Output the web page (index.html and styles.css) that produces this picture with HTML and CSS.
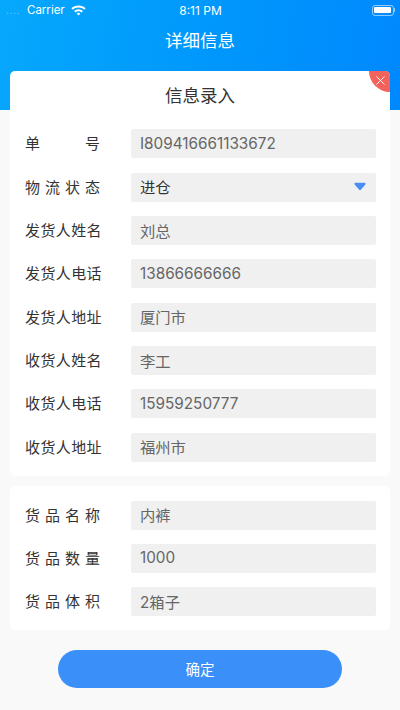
FILE: index.html
```html
<!DOCTYPE html>
<html lang="zh-CN">

<head>
  <meta charset="UTF-8">
  <meta name="viewport" content="width=device-width, initial-scale=1.0">
  <title>详细信息</title>
  <link rel="stylesheet" href="styles.css">
</head>

<body>
  <header class="header">
    <div class="status-bar">
      <div class="status-left">
        <span class="signal">....</span>
        <span>Carrier</span>
        <svg class="wifi" width="15" height="11" viewBox="0 0 15 11">
          <path d="M7.5 0.5C4.7 0.5 2.3 1.5 0.4 3.3L1.8 4.8C3.3 3.4 5.3 2.5 7.5 2.5S11.700 3.4 13.200 4.800L14.600 3.300C12.700 1.500 10.300 0.500 7.500 0.500Z" fill="#fff" />
          <path d="M7.500 4.200C5.800 4.200 4.300 4.900 3.100 6L4.500 7.400C5.300 6.700 6.300 6.200 7.500 6.200S9.700 6.700 10.500 7.400L11.900 6C10.700 4.900 9.200 4.200 7.500 4.200Z" fill="#fff" />
          <path d="M7.500 7.700C6.800 7.700 6.200 8 5.700 8.400L7.500 10.500L9.300 8.400C8.800 8 8.200 7.700 7.500 7.700Z" fill="#fff" />
        </svg>
      </div>
      <div class="status-time">8:11 PM</div>
      <div class="battery">
        <div class="battery-body">
          <div class="battery-fill"></div>
        </div>
        <div class="battery-cap"></div>
      </div>
    </div>
    <h1 class="page-title">详细信息</h1>
  </header>

  <main class="content">
    <section class="card card-main">
      <div class="close">
        <svg width="9" height="9" viewBox="0 0 9 9">
          <path d="M0.500 0.500L8.500 8.500M8.500 0.500L0.500 8.500" stroke="#fff" stroke-width="1" fill="none" />
        </svg>
      </div>
      <h2 class="card-title">信息录入</h2>
      <div class="rows">
        <div class="row">
          <div class="label">单号</div>
          <div class="field">I809416661133672</div>
        </div>
        <div class="row">
          <div class="label">物流状态</div>
          <div class="field field-select">
            <span>进仓</span>
            <svg class="arrow" width="12" height="9" viewBox="0 0 13 9">
              <path d="M1.500 0.500H11.500C12.500 0.500 12.900 1.500 12.300 2.200L7.400 8C6.900 8.500 6.100 8.500 5.600 8L0.700 2.200C0.100 1.500 0.500 0.500 1.500 0.500Z" fill="#4a8cf7" />
            </svg>
          </div>
        </div>
        <div class="row">
          <div class="label">发货人姓名</div>
          <div class="field">刘总</div>
        </div>
        <div class="row">
          <div class="label">发货人电话</div>
          <div class="field">13866666666</div>
        </div>
        <div class="row">
          <div class="label">发货人地址</div>
          <div class="field">厦门市</div>
        </div>
        <div class="row">
          <div class="label">收货人姓名</div>
          <div class="field">李工</div>
        </div>
        <div class="row">
          <div class="label">收货人电话</div>
          <div class="field">15959250777</div>
        </div>
        <div class="row">
          <div class="label">收货人地址</div>
          <div class="field">福州市</div>
        </div>
      </div>
    </section>

    <section class="card card-goods">
      <div class="rows">
        <div class="row">
          <div class="label">货品名称</div>
          <div class="field">内裤</div>
        </div>
        <div class="row">
          <div class="label">货品数量</div>
          <div class="field">1000</div>
        </div>
        <div class="row">
          <div class="label">货品体积</div>
          <div class="field">2箱子</div>
        </div>
      </div>
    </section>

    <button class="submit" type="button">确定</button>
  </main>
</body>

</html>
```

FILE: styles.css
```css
* {
  box-sizing: border-box;
}

html,
body {
  height: 100%;
}

body {
  margin: 0;
  background-color: #f9f9f9;
  font-family: Inter, "Noto Sans CJK SC", sans-serif;
  color: #333;
  overflow: hidden;
}

.header {
  height: 110px;
  background: linear-gradient(100deg, #06a8fc 0%, #0098fc 50%, #0088fe 100%);
  color: white;
}

.status-bar {
  display: flex;
  align-items: center;
  justify-content: space-between;
  height: 20px;
  padding: 0 5px 0 6px;
  font-size: 11.5px;
}

.status-left {
  display: flex;
  flex: 1;
  align-items: center;
  gap: 5px;
}

.signal {
  width: 16px;
  color: rgba(255, 255, 255, 0.45);
  letter-spacing: 0.6px;
  font-size: 10px;
}

.wifi {
  margin-left: 1px;
}

.status-time {
  font-size: 12px;
  text-align: center;
}

.battery {
  display: flex;
  flex: 1;
  align-items: center;
  justify-content: flex-end;
}

.battery-body {
  width: 22px;
  height: 11px;
  padding: 1.5px;
  border: 1px solid rgba(255, 255, 255, 0.55);
  border-radius: 3px;
}

.battery-fill {
  height: 100%;
  background-color: white;
  border-radius: 1px;
}

.battery-cap {
  width: 1.5px;
  height: 4px;
  background-color: rgba(255, 255, 255, 0.55);
}

.page-title {
  margin: 9px 0 0;
  font-size: 17.5px;
  font-weight: 400;
  line-height: 24px;
  text-align: center;
}

.content {
  display: flex;
  flex-direction: column;
  gap: 10px;
  margin-top: -39px;
  padding: 0 10px;
}

.card {
  background-color: white;
  border-radius: 5px;
}

.card-main {
  position: relative;
  height: 405px;
  overflow: hidden;
}

.close {
  position: absolute;
  top: -21px;
  right: -21px;
  width: 42px;
  height: 42px;
  background-color: #f4625c;
  border-radius: 50%;
}

.close svg {
  position: absolute;
  top: 26px;
  left: 7px;
}

.card-title {
  margin: 0;
  height: 58.3px;
  font-size: 17.5px;
  font-weight: 400;
  line-height: 50px;
  text-align: center;
}

.rows {
  display: flex;
  flex-direction: column;
  gap: 14.33px;
  padding: 0 14px 0 15px;
}

.card-goods {
  height: 144px;
  padding-top: 14.7px;
}

.row {
  display: flex;
  align-items: center;
  gap: 30px;
  height: 29px;
}

.label {
  flex: none;
  width: 75.5px;
  padding-bottom: 2px;
  font-size: 15px;
  letter-spacing: 0.4px;
  color: #333;
  white-space: nowrap;
  text-align: justify;
  text-align-last: justify;
}

.field {
  display: flex;
  align-items: center;
  flex: 1;
  height: 29px;
  padding: 0 0 1.5px 9.5px;
  background-color: #f0f0f0;
  border-radius: 2px;
  font-size: 15.3px;
  color: #666;
}

.field-select {
  justify-content: space-between;
  padding-right: 10px;
  color: #333;
}

.submit {
  display: block;
  align-self: center;
  width: 284px;
  height: 38px;
  margin-top: 10px;
  padding: 0 0 2px;
  border: 0;
  border-radius: 19px;
  background-color: #3a8ff8;
  color: white;
  font-family: inherit;
  font-size: 14.5px;
}
```
